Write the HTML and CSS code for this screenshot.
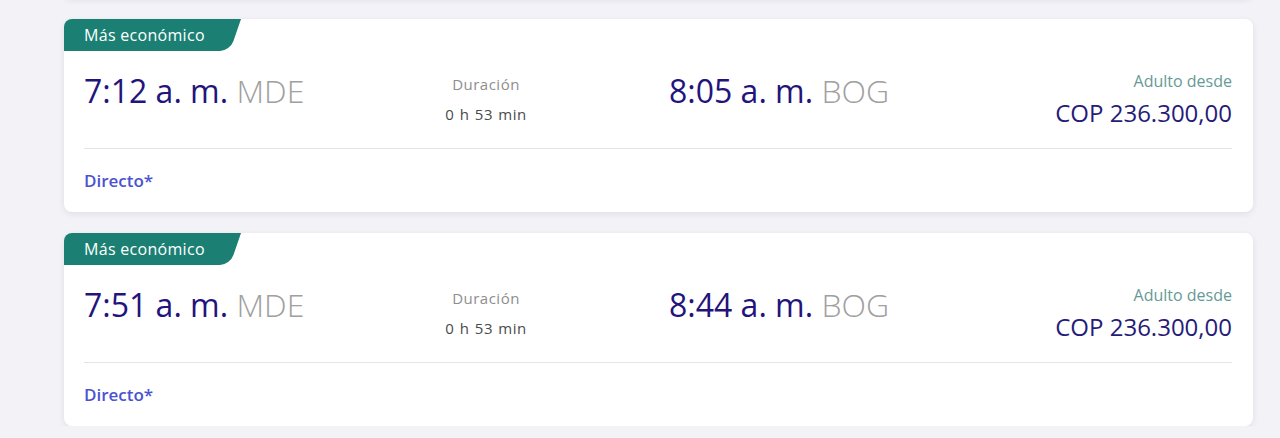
FILE: index.html
```html
<!DOCTYPE html>
<html lang="es">
<head>
  <meta charset="UTF-8">
  <meta name="viewport" content="width=device-width, initial-scale=1.0">
  <title>Vuelos MDE - BOG</title>
  <link rel="stylesheet" href="styles.css">
</head>
<body>
  <div class="flight-list">

    <!-- previous result, scrolled up out of view -->
    <div class="flight-card card-prev"></div>

    <div class="flight-card">
      <div class="card-head">
        <span class="badge">Más económico</span>
      </div>
      <div class="flight-row">
        <div class="time">7:12 a. m. <span class="airport">MDE</span></div>
        <div class="duration">
          <div class="duration-label">Duración</div>
          <div class="duration-value">0 h 53 min</div>
        </div>
        <div class="time arrival">8:05 a. m. <span class="airport">BOG</span></div>
        <div class="price">
          <div class="price-label">Adulto desde</div>
          <div class="price-value">COP 236.300,00</div>
        </div>
      </div>
      <div class="card-foot">
        <span class="stops">Directo*</span>
      </div>
    </div>

    <div class="flight-card">
      <div class="card-head">
        <span class="badge">Más económico</span>
      </div>
      <div class="flight-row">
        <div class="time">7:51 a. m. <span class="airport">MDE</span></div>
        <div class="duration">
          <div class="duration-label">Duración</div>
          <div class="duration-value">0 h 53 min</div>
        </div>
        <div class="time arrival">8:44 a. m. <span class="airport">BOG</span></div>
        <div class="price">
          <div class="price-label">Adulto desde</div>
          <div class="price-value">COP 236.300,00</div>
        </div>
      </div>
      <div class="card-foot">
        <span class="stops">Directo*</span>
      </div>
    </div>

  </div>
</body>
</html>
```

FILE: styles.css
```css
* {
  margin: 0;
  padding: 0;
  box-sizing: border-box;
  font-family: 'Open Sans', 'Lato', sans-serif;
}

body {
  background: #f2f2f7;
  overflow: hidden;
}

.flight-list {
  display: flex;
  flex-direction: column;
  gap: 21px;
  margin-top: -50px;
  margin-left: 64px;
  width: 1189px;
}

.flight-card {
  background: #fff;
  border-radius: 8px;
  box-shadow: 0 2px 6px rgba(30, 30, 80, 0.09);
}

.card-prev {
  height: 48px;
}

.card-head {
  height: 32px;
}

.badge {
  position: relative;
  z-index: 0;
  display: inline-block;
  height: 32px;
  line-height: 32px;
  padding-left: 20px;
  width: 156px;
  background: #1b7f73;
  color: #fff;
  font-size: 16px;
  letter-spacing: 0.3px;
  white-space: nowrap;
  border-top-left-radius: 8px;
}

/* slanted right edge of the tag */
.badge::after {
  content: "";
  position: absolute;
  z-index: -1;
  top: 0;
  left: 144px;
  width: 22px;
  height: 32px;
  background: #1b7f73;
  transform: skewX(-19deg);
  transform-origin: bottom left;
  border-bottom-right-radius: 10px;
}

.flight-row {
  display: grid;
  grid-template-columns: 318px 168px 1fr auto;
  align-items: start;
  margin: 0 21px 0 20px;
  padding: 20px 0 19px;
}

.time {
  font-size: 32px;
  line-height: 40px;
  color: #23147c;
  white-space: nowrap;
}

.airport {
  color: #a0a0a0;
  font-weight: 300;
}

.arrival {
  padding-left: 99px;
}

.duration {
  text-align: center;
  margin-top: -2px;
  font-size: 15px;
  line-height: 30px;
  letter-spacing: 0.5px;
}

.duration-label {
  color: #8e8e8e;
}

.duration-value {
  color: #4a4a4a;
  word-spacing: 1px;
}

.price {
  text-align: right;
}

.price-label {
  font-size: 16px;
  line-height: 20px;
  color: #659a95;
}

.price-value {
  margin-top: 6px;
  font-size: 24px;
  line-height: 32px;
  color: #261c78;
}

.card-foot {
  margin: 0 21px 0 20px;
  padding: 22px 0 21px;
  border-top: 1px solid #e3e3e8;
}

.stops {
  display: block;
  font-size: 17px;
  line-height: 20px;
  font-weight: 600;
  color: #4b52d2;
}
```
